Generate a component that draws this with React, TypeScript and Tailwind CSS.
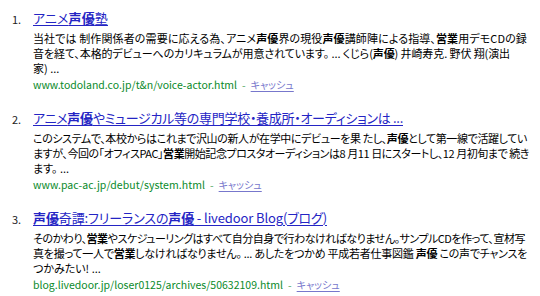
import React, { useLayoutEffect, useRef } from "react";

type Seg = string | { b: string };

const B = (s: string) => ({ b: s });

function Segs({ segs }: { segs: Seg[] }) {
  return (
    <>
      {segs.map((s, i) =>
        typeof s === "string" ? (
          <span key={i}>{s}</span>
        ) : (
          <b key={i} className="font-bold">
            {s.b}
          </b>
        )
      )}
    </>
  );
}

function Fit({ w, className, children }: { w?: number; className?: string; children: React.ReactNode }) {
  const ref = useRef<HTMLSpanElement>(null);
  useLayoutEffect(() => {
    const fit = () => {
      const el = ref.current;
      if (!el || !w) return;
      el.style.letterSpacing = "0px";
      const natural = el.getBoundingClientRect().width;
      const n = (el.textContent || "").length;
      if (n > 0) el.style.letterSpacing = `${(w - natural) / n}px`;
    };
    fit();
    if (document.fonts && document.fonts.ready) document.fonts.ready.then(fit);
  }, [w]);
  return (
    <span ref={ref} className={"inline-block whitespace-nowrap " + (className || "")}>
      {children}
    </span>
  );
}

type L = { segs: Seg[]; w?: number };

type Item = {
  n: string;
  title: Seg[];
  tw: number;
  lines: L[];
  url: string;
  uw: number;
};

const items: Item[] = [
  {
    n: "1.",
    title: ["アニメ", B("声優"), "塾"],
    tw: 75,
    lines: [
      { segs: ["当社では 制作関係者の需要に応える為、アニメ", B("声優"), "界の現役", B("声優"), "講師陣による指導、", B("営業"), "用デモCDの録"], w: 494 },
      { segs: ["音を経て、本格的デビューへのカリキュラムが用意されています。 ... くじら(", B("声優"), ") 井崎寿克. 野伏 翔(演出"], w: 477 },
      { segs: ["家) ..."] },
    ],
    url: "www.todoland.co.jp/t&n/voice-actor.html",
    uw: 204,
  },
  {
    n: "2.",
    title: ["アニメ", B("声優"), "やミュージカル等の専門学校・養成所・オーディションは ..."],
    tw: 370,
    lines: [
      { segs: ["このシステムで、本校からはこれまで沢山の新人が在学中にデビューを果 たし、", B("声優"), "として第一線で活躍してい"], w: 494 },
      { segs: ["ますが、今回の「オフィスPAC」", B("営業"), "開始記念プロスタオーディションは8 月11 日にスタートし、12 月初旬まで 続き"], w: 496 },
      { segs: ["ます。 ..."] },
    ],
    url: "www.pac-ac.jp/debut/system.html",
    uw: 172,
  },
  {
    n: "3.",
    title: [B("声優"), "奇譚:フリーランスの", B("声優"), " - livedoor Blog(ブログ)"],
    tw: 294,
    lines: [
      { segs: ["そのかわり、", B("営業"), "やスケジューリングはすべて自分自身で行わなければなりません。サンプルCDを作って、宣材写"], w: 492 },
      { segs: ["真を撮って一人で", B("営業"), "しなければなりません。 ... あしたをつかめ 平成若者仕事図鑑 ", B("声優"), " この声でチャンスを"], w: 494 },
      { segs: ["つかみたい! ..."] },
    ],
    url: "blog.livedoor.jp/loser0125/archives/50632109.html",
    uw: 250,
  },
];

export default function App() {
  return (
    <div
      className="w-[540px] h-[296px] bg-white overflow-hidden pt-[10px] text-black [font-feature-settings:'palt']"
      style={{ fontFamily: '"Noto Sans CJK JP", "Noto Sans", sans-serif' }}
    >
      <div className="flex flex-col gap-[18px]">
        {items.map((it) => (
          <div key={it.n} className="flex">
            <div className="w-[33px] shrink-0 pl-[12px] text-[11px] leading-[16px] pt-[1px] text-[#222]">{it.n}</div>
            <div className="flex flex-col min-w-0">
              <div className="text-[13px] leading-[16px] h-[16px] whitespace-nowrap text-[#2424c4] underline underline-offset-[2px]">
                <Fit w={it.tw} className="underline underline-offset-[2px]">
                  <Segs segs={it.title} />
                </Fit>
              </div>
              <div className="mt-[5px] text-[11px]">
                {it.lines.map((l, i) => (
                  <div key={i} className="h-[15px] leading-[15px] whitespace-nowrap">
                    {l.w ? (
                      <Fit w={l.w}>
                        <Segs segs={l.segs} />
                      </Fit>
                    ) : (
                      <Segs segs={l.segs} />
                    )}
                  </div>
                ))}
              </div>
              <div className="mt-[1px] text-[10.5px] leading-[15px] h-[15px] whitespace-nowrap flex items-baseline">
                <Fit w={it.uw} className="text-[#0a8a2a]">
                  {it.url}
                </Fit>
                <span className="text-[#5aaa6a] mx-[5px]">-</span>
                <span className="text-[#7777cc] underline underline-offset-[2px] text-[10px]">キャッシュ</span>
              </div>
            </div>
          </div>
        ))}
      </div>
    </div>
  );
}
